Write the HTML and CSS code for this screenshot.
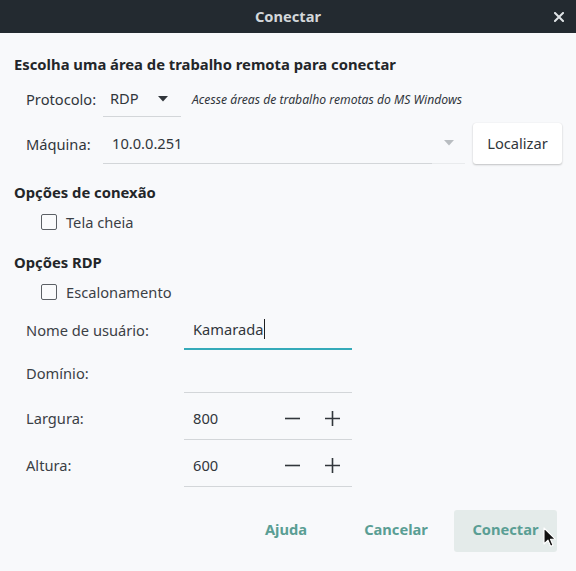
FILE: index.html
```html
<!DOCTYPE html>
<html lang="pt-BR">
<head>
<meta charset="utf-8">
<title>Conectar</title>
<link rel="stylesheet" href="styles.css">
</head>
<body>
<div class="window">
  <header class="titlebar">
    <span class="tb-spacer"></span>
    <h1 class="title">Conectar</h1>
    <button class="close" aria-label="Fechar">
      <svg width="10" height="10" viewBox="0 0 10 10"><path d="M1 1L9 9M9 1L1 9" stroke="#dfe3e6" stroke-width="2" stroke-linecap="square"/></svg>
    </button>
  </header>
  <main class="content">
    <h2 class="section first">Escolha uma área de trabalho remota para conectar</h2>
    <div class="row proto-row">
      <span class="label">Protocolo:</span>
      <div class="combo">
        <span class="combo-text">RDP</span>
        <svg class="combo-arrow" width="10" height="6" viewBox="0 0 10 6"><path d="M0 0H10L5 5.5Z" fill="#31363b"/></svg>
      </div>
      <span class="desc">Acesse áreas de trabalho remotas do MS Windows</span>
    </div>
    <div class="row machine-row">
      <span class="label">Máquina:</span>
      <div class="entry-combo">
        <span class="ec-value">10.0.0.251</span>
        <span class="ec-drop"><svg width="10" height="6" viewBox="0 0 10 6"><path d="M0 0H10L5 5.5Z" fill="#b9bdc1"/></svg></span>
      </div>
      <button class="btn-locate">Localizar</button>
    </div>
    <h2 class="section s2">Opções de conexão</h2>
    <label class="check"><span class="box"></span>Tela cheia</label>
    <h2 class="section s3">Opções RDP</h2>
    <label class="check"><span class="box"></span>Escalonamento</label>
    <div class="form">
      <span class="flabel">Nome de usuário:</span>
      <div class="entry focused"><span>Kamarada</span><span class="caret"></span></div>
      <span class="flabel">Domínio:</span>
      <div class="entry"></div>
      <span class="flabel">Largura:</span>
      <div class="entry spin">
        <span class="spin-val">800</span>
        <span class="spin-btn"><svg width="15" height="15" viewBox="0 0 15 15"><path d="M0 7.5H15" stroke="#31363b" stroke-width="1.6"/></svg></span>
        <span class="spin-btn"><svg width="15" height="15" viewBox="0 0 15 15"><path d="M0 7.5H15M7.5 0V15" stroke="#31363b" stroke-width="1.6"/></svg></span>
      </div>
      <span class="flabel">Altura:</span>
      <div class="entry spin">
        <span class="spin-val">600</span>
        <span class="spin-btn"><svg width="15" height="15" viewBox="0 0 15 15"><path d="M0 7.5H15" stroke="#31363b" stroke-width="1.6"/></svg></span>
        <span class="spin-btn"><svg width="15" height="15" viewBox="0 0 15 15"><path d="M0 7.5H15M7.5 0V15" stroke="#31363b" stroke-width="1.6"/></svg></span>
      </div>
    </div>
    <footer class="actions">
      <button class="action help">Ajuda</button>
      <button class="action cancel">Cancelar</button>
      <button class="action primary">Conectar</button>
    </footer>
  </main>
  <svg class="pointer" width="13" height="21" viewBox="0 0 13 21"><path d="M1 1V17L5 13.2L7.6 19.3L10 18.3L7.5 12.3H12.5Z" fill="#111" stroke="#fff" stroke-width="1.1" stroke-linejoin="round"/></svg>
</div>
</body>
</html>
```
FILE: styles.css
```css
* { box-sizing: border-box; }
html, body { margin: 0; padding: 0; }
body {
  background: #f8f9fb;
  font-family: "Noto Sans", "Open Sans", sans-serif;
  color: #31363b;
  width: 576px;
  height: 571px;
  overflow: hidden;
}
.window { position: relative; width: 576px; height: 571px; }
.titlebar {
  height: 33px;
  background: #232a30;
  display: grid;
  grid-template-columns: 1fr auto 1fr;
  align-items: center;
}
.title {
  margin: 0;
  font-size: 14.67px;
  font-weight: 700;
  color: #d3d7da;
  line-height: 33px;
}
.close {
  justify-self: end;
  background: none;
  border: 0;
  padding: 0;
  margin-right: 12px;
  width: 10px;
  height: 10px;
  display: flex;
}
.content { padding: 0 19px 0 14px; }
.section {
  margin: 0;
  font-size: 14.8px;
  font-weight: 700;
  color: #232629;
  line-height: 20px;
  height: 20px;
}
.section.first { margin-top: 21px; }
.section.s2 { margin-top: 18px; }
.section.s3 { margin-top: 20px; }
.row { display: flex; align-items: center; padding-left: 12px; }
.row > * { flex: none; }
.label { width: 77px; font-size: 14.67px; }
.proto-row { margin-top: 8px; height: 35px; padding-bottom: 1px; }
.combo {
  width: 78px;
  height: 35px;
  border-bottom: 1px solid #d3d6d9;
  display: flex;
  align-items: center;
  padding-left: 7px;
  padding-bottom: 2px;
  font-size: 14.67px;
}
.combo-text { flex: 1; }
.combo-arrow { margin-right: 13px; margin-top: 2px; }
.desc { margin-left: 11px; font-size: 12.2px; font-style: italic; }
.machine-row { margin-top: 6px; height: 41px; }
.entry-combo { display: flex; height: 41px; width: 362px; }
.ec-value {
  flex: 1;
  display: flex;
  align-items: center;
  padding-left: 9px;
  font-size: 14.67px;
  border-bottom: 1px solid #d3d6d9;
}
.ec-drop {
  width: 33px;
  display: flex;
  align-items: center;
  justify-content: center;
  border-bottom: 1px solid #e9ebed;
}
.btn-locate {
  margin-left: 8px;
  width: 89px;
  height: 41px;
  background: #ffffff;
  border: 0;
  border-radius: 3px;
  box-shadow: 0 1px 2px rgba(0,0,0,0.22), 0 0 1px rgba(0,0,0,0.1);
  font-family: inherit;
  font-size: 14.67px;
  color: #31363b;
  padding: 0 0 2px;
}
.check {
  display: flex;
  align-items: center;
  height: 21px;
  margin-top: 9px;
  padding-left: 27px;
  font-size: 14.67px;
  color: #3b4045;
}
.box {
  width: 16px;
  height: 16px;
  border: 1.5px solid #5b6065;
  border-radius: 2px;
  margin-right: 9px;
  background: #fafbfc;
}
.form {
  margin-top: 11px;
  padding-left: 12px;
  display: grid;
  grid-template-columns: 158px 168px;
  grid-template-rows: 37px 36px 40px 40px;
  row-gap: 7px;
  align-items: center;
}
.flabel { font-size: 14.67px; color: #3b4045; padding-bottom: 4px; }
.entry {
  height: 100%;
  border-bottom: 1px solid #d3d6d9;
  display: flex;
  align-items: center;
  padding-left: 9px;
  padding-bottom: 4px;
  font-size: 14.67px;
}
.entry.focused { border-bottom: 2px solid #35aab9; }
.spin { padding-bottom: 3px; }
.caret { width: 1px; height: 20px; background: #1d1f21; margin-left: 1px; }
.spin-val { width: 79px; }
.spin-btn { width: 40px; height: 100%; display: flex; align-items: center; justify-content: center; }
.actions {
  margin-top: 23px;
  display: flex;
  justify-content: flex-end;
}
.action {
  height: 42px;
  border: 0;
  background: transparent;
  font-family: inherit;
  font-size: 14.67px;
  font-weight: 700;
  color: #5a9e94;
  padding: 0 0 4px;
  border-radius: 3px;
}
.help { width: 80px; margin-right: 20px; }
.cancel { width: 100px; margin-right: 8px; }
.primary { width: 103px; background: #e4ebea; }
.pointer { position: absolute; left: 543px; top: 527px; }
```
